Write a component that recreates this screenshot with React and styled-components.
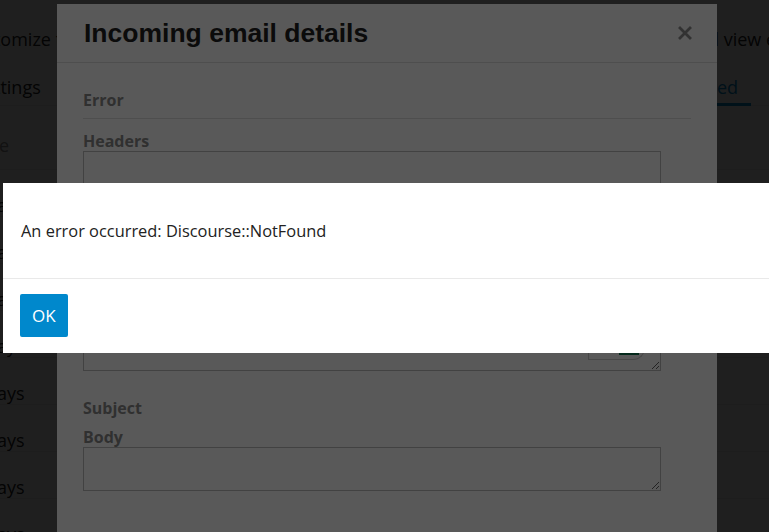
import React from 'react';
import styled, { createGlobalStyle } from 'styled-components';

const Global = createGlobalStyle`
  html, body { margin: 0; padding: 0; background: #fff; overflow: hidden; }
  body { font-family: "Open Sans", "Noto Sans", sans-serif; color: #222; }
  * { box-sizing: border-box; }
`;

/* ---------- background admin page ---------- */
const BgPage = styled.div`
  width: 769px;
  height: 532px;
  overflow: hidden;
  background: #fff;
  color: #222;
  font-size: 18px;
`;

const DescRow = styled.div`
  display: grid;
  grid-template-columns: 708px 1fr;
  height: 62px;
  padding-top: 15px;
  line-height: 26px;
  white-space: nowrap;
`;

const Clip = styled.div`
  overflow: hidden;
  white-space: nowrap;
  display: flex;
  align-items: center;
`;

const Shift = styled.span`
  display: inline-block;
  margin-left: ${p => p.$by}px;
`;

const TabsRow = styled.div`
  display: grid;
  grid-template-columns: 706px auto 1fr;
  height: 44px;
  border-bottom: 1px solid #e9e9e9;
`;

const Tab = styled.div`
  display: flex;
  align-items: center;
  padding: 9px 13px 0 0;
  overflow: hidden;
  white-space: nowrap;
  color: ${p => (p.$active ? '#0088cc' : '#222')};
  border-bottom: 3px solid ${p => (p.$active ? '#0088cc' : 'transparent')};
  margin-bottom: -1px;
`;

const TableHead = styled.div`
  display: flex;
  align-items: flex-end;
  height: 64px;
  padding-bottom: 12px;
  border-bottom: 1px solid #e9e9e9;
  color: #919191;
`;

const TableRow = styled.div`
  display: flex;
  align-items: flex-end;
  height: 47px;
  line-height: 22px;
  border-bottom: 1px solid #e9e9e9;
`;

/* ---------- overlays ---------- */
const Overlay = styled.div`
  position: fixed;
  inset: 0;
  background: rgba(0, 0, 0, 0.65);
  z-index: ${p => p.$z};
`;

/* ---------- incoming email modal ---------- */
const Modal = styled.div`
  position: fixed;
  left: 57px;
  top: 4px;
  width: 660px;
  height: 600px;
  background: #fff;
  z-index: 2;
  display: flex;
  flex-direction: column;
`;

const ModalHeader = styled.div`
  display: flex;
  align-items: center;
  justify-content: space-between;
  height: 59px;
  padding: 0 25px 0 27px;
  border-bottom: 1px solid #e0e0e0;
`;

const Title = styled.h3`
  margin: 0;
  font-family: "Liberation Sans", Arial, sans-serif;
  font-weight: bold;
  font-size: 26.5px;
  color: #222;
  line-height: 32px;
`;

const Close = styled.button`
  border: 0;
  background: none;
  padding: 0;
  width: 14px;
  height: 14px;
  display: flex;
  color: #919191;
`;

const ModalBody = styled.div`
  padding: 27px 26px 0 26px;
`;

const Section = styled.div`
  margin-top: ${p => p.$mt || 0}px;
  padding-bottom: ${p => p.$pb || 0}px;
  border-bottom: ${p => (p.$line ? '1px solid #e0e0e0' : 'none')};
`;

const Label = styled.div`
  font-weight: bold;
  font-size: 16px;
  line-height: 20px;
  color: #8a8a8a;
`;

const FieldWrap = styled.div`
  position: relative;
  width: 95%;
`;

const Area = styled.textarea`
  display: block;
  width: 100%;
  height: ${p => p.$h}px;
  border: 1px solid #bdbdbd;
  border-radius: 0;
  margin: 0;
  padding: 6px;
  font-family: inherit;
  background: #fff;
`;

const Badge = styled.div`
  position: absolute;
  right: 16px;
  bottom: 11px;
  width: 57px;
  height: 30px;
  border: 1px solid #cfcfcf;
  border-top: 0;
  border-radius: 0 0 12px 0;
  background: #fff;
`;

const BadgeMark = styled.div`
  position: absolute;
  right: 5px;
  bottom: 4px;
  width: 20px;
  height: 10px;
  background: #0f7a50;
`;

/* ---------- error dialog ---------- */
const Dialog = styled.div`
  position: fixed;
  left: 3px;
  top: 183px;
  width: 800px;
  height: 170px;
  background: #fff;
  z-index: 4;
`;

const DialogBody = styled.div`
  padding: 37px 18px 0 18px;
  height: 96px;
  font-size: 16.4px;
  line-height: 22px;
  color: #222;
  border-bottom: 1px solid #e9e9e9;
`;

const DialogFooter = styled.div`
  padding: 15px 17px;
`;

const OkButton = styled.button`
  border: 0;
  border-radius: 2px;
  background: #0088cc;
  color: #fff;
  font-family: "Open Sans", "Noto Sans", sans-serif;
  font-size: 17px;
  line-height: 23px;
  padding: 10px 12px;
  cursor: pointer;
`;

export default function App() {
  return (
    <>
      <Global />
      <BgPage>
        <DescRow>
          <Clip><Shift $by={-37}>Customize the</Shift></Clip>
          <Clip><Shift $by={-21}>and view emails</Shift></Clip>
        </DescRow>
        <TabsRow>
          <Tab><Shift $by={-26}>Settings</Shift></Tab>
          <Tab $active><Shift $by={-40}>Rejected</Shift></Tab>
          <div />
        </TabsRow>
        <TableHead>
          <Clip><Shift $by={-31}>Type</Shift></Clip>
        </TableHead>
        {['2 days', '2 days', '3 days', '3 days', '4 days', '5 days', '6 days', '7 days'].map((d, i) => (
          <TableRow key={i}>
            <Clip><Shift $by={-29}>{d}</Shift></Clip>
          </TableRow>
        ))}
      </BgPage>

      <Overlay $z={1} />
      <Modal>
        <ModalHeader>
          <Title>Incoming email details</Title>
          <Close aria-label="close">
            <svg width="14" height="14" viewBox="0 0 14 14">
              <path d="M2 2 L12 12 M12 2 L2 12" stroke="currentColor" strokeWidth="2.8" strokeLinecap="square" />
            </svg>
          </Close>
        </ModalHeader>
        <ModalBody>
          <Section $line $pb={8}>
            <Label>Error</Label>
          </Section>
          <Section $mt={12}>
            <Label>Headers</Label>
            <FieldWrap>
              <Area $h={220} readOnly />
              <Badge><BadgeMark /></Badge>
            </FieldWrap>
          </Section>
          <Section $mt={27}>
            <Label>Subject</Label>
          </Section>
          <Section $mt={9}>
            <Label>Body</Label>
            <FieldWrap>
              <Area $h={44} readOnly />
            </FieldWrap>
          </Section>
        </ModalBody>
      </Modal>

      <Overlay $z={3} />
      <Dialog>
        <DialogBody>An error occurred: Discourse::NotFound</DialogBody>
        <DialogFooter>
          <OkButton>OK</OkButton>
        </DialogFooter>
      </Dialog>
    </>
  );
}
